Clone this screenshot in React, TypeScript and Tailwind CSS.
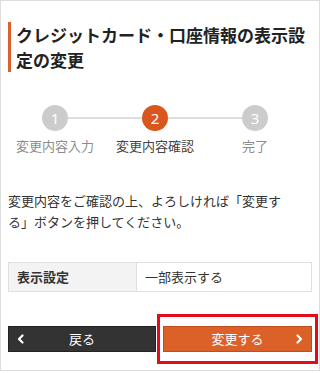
import React from 'react';

const font = { fontFamily: '"Noto Sans CJK JP", "Noto Sans", sans-serif' };

type StepState = 'done' | 'active' | 'todo';

interface Step {
  num: number;
  label: string;
  state: StepState;
}

const steps: Step[] = [
  { num: 1, label: '変更内容入力', state: 'todo' },
  { num: 2, label: '変更内容確認', state: 'active' },
  { num: 3, label: '完了', state: 'todo' },
];

function Chevron({ dir }: { dir: 'left' | 'right' }) {
  return (
    <svg width="8" height="10" viewBox="0 0 8 10" fill="none">
      <path
        d={dir === 'left' ? 'M5.5 1.5 2 5l3.5 3.5' : 'M2.5 1.5 6 5 2.5 8.5'}
        stroke="white"
        strokeWidth="2.2"
        strokeLinecap="round"
        strokeLinejoin="round"
      />
    </svg>
  );
}

function StepBar() {
  return (
    <div className="ml-[4px] mt-[33px] grid w-[300px] grid-cols-3">
      {steps.map((s, i) => (
        <div key={s.num} className="flex flex-col items-center">
          <div className="flex w-full items-center">
            <div className={`h-[2px] flex-1 ${i === 0 ? 'bg-transparent' : 'bg-[#dddddd]'}`} />
            <div
              className={`flex h-[26px] w-[26px] items-center justify-center rounded-full text-[15px] leading-none text-white ${
                s.state === 'active' ? 'bg-[#d9571e]' : 'bg-[#cccccc]'
              }`}
              style={{ fontFamily: '"Noto Sans", sans-serif' }}
            >
              {s.num}
            </div>
            <div className={`h-[2px] flex-1 ${i === steps.length - 1 ? 'bg-transparent' : 'bg-[#dddddd]'}`} />
          </div>
          <div
            className={`mt-[6px] text-[13px] leading-[18px] ${
              s.state === 'active' ? 'text-[#444444]' : 'text-[#8c8c8c]'
            }`}
          >
            {s.label}
          </div>
        </div>
      ))}
    </div>
  );
}

export default function App() {
  return (
    <div className="h-[371px] w-[320px] border border-[#dddddd] bg-white" style={font}>
      {/* Page title */}
      <h1 className="ml-[7px] mt-[21px] w-[303px] border-l-[3px] border-[#d9632c] pl-[5px] text-[17px] font-bold leading-[25px] text-[#222222]">
        クレジットカード・口座情報の表示設定の変更
      </h1>

      <StepBar />

      <p className="ml-[7px] mt-[35px] w-[282px] text-[13px] leading-[21px] text-[#333333]">
        変更内容をご確認の上、よろしければ「変更する」ボタンを押してください。
      </p>

      {/* Confirmation table */}
      <div className="ml-[7px] mt-[30px] flex h-[30px] w-[304px] border border-[#e0e0e0] text-[13px] text-[#333333]">
        <div className="flex w-[128px] items-center border-r border-[#e0e0e0] bg-[#f3f3f3] pl-[8px] font-bold">
          表示設定
        </div>
        <div className="flex flex-1 items-center pl-[8px]">一部表示する</div>
      </div>

      {/* Actions */}
      <div className="ml-[7px] mt-[34px] flex w-[304px] gap-[7px]">
        <button className="relative flex h-[26px] w-[148px] items-center justify-center border border-[#222222] bg-[#333333] text-[13px] text-white">
          <span className="absolute left-[8px] top-1/2 -translate-y-1/2">
            <Chevron dir="left" />
          </span>
          戻る
        </button>
        <div className="relative">
          <button className="relative flex h-[26px] w-[149px] items-center justify-center border border-[#bf4e1c] bg-[#dc6128] text-[13px] text-white">
            変更する
            <span className="absolute right-[8px] top-1/2 -translate-y-1/2">
              <Chevron dir="right" />
            </span>
          </button>
          {/* highlight frame */}
          <div className="pointer-events-none absolute bottom-[-12px] left-[-6px] right-[-6px] top-[-12px] border-[3px] border-[#e50c18]" />
        </div>
      </div>
    </div>
  );
}
